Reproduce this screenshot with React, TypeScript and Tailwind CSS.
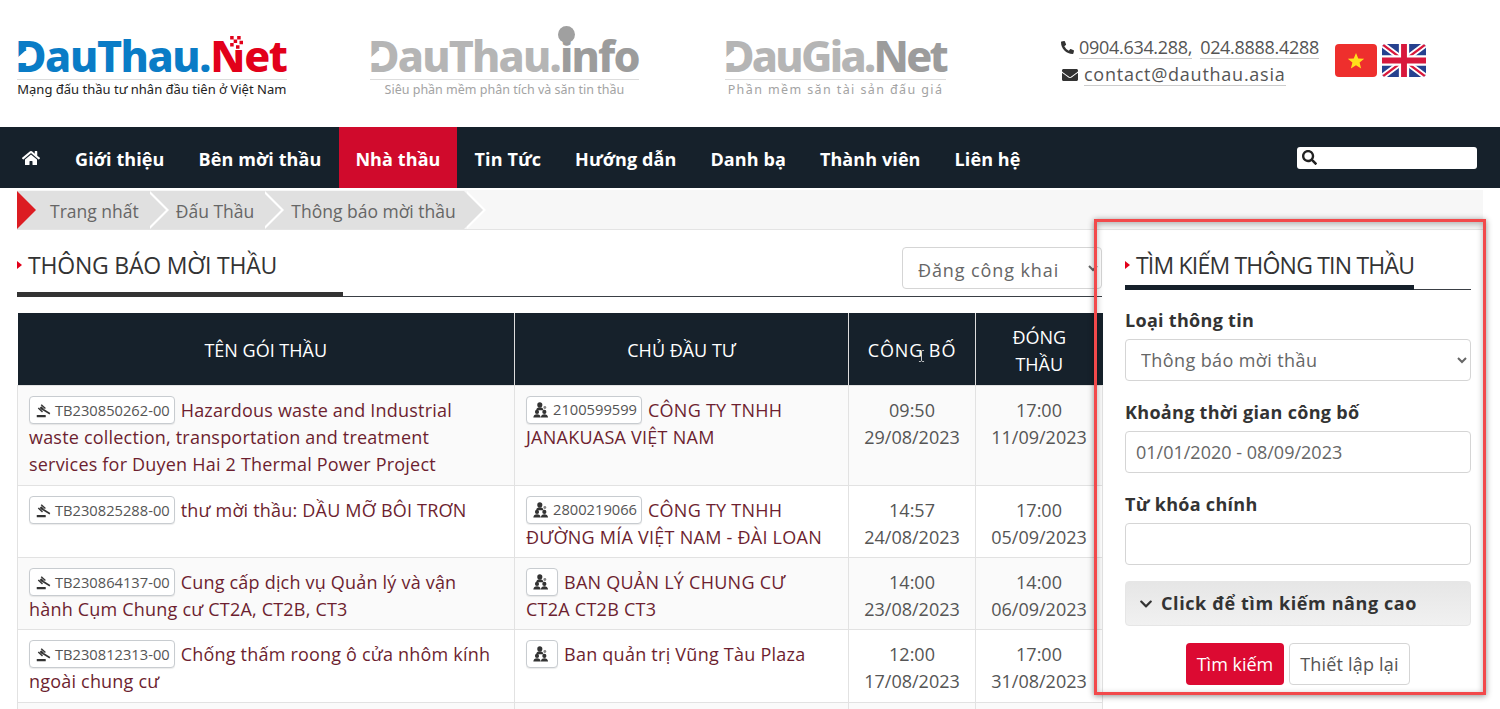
import React from 'react';
import { FaChevronDown, FaEnvelope, FaHome, FaPhoneAlt, FaSearch } from 'react-icons/fa';

const navItems = ['Giới thiệu', 'Bên mời thầu', 'Nhà thầu', 'Tin Tức', 'Hướng dẫn', 'Danh bạ', 'Thành viên', 'Liên hệ'];

const rows = [
  {
    code: 'TB230850262-00',
    title: 'Hazardous waste and Industrial waste collection, transportation and treatment services for Duyen Hai 2 Thermal Power Project',
    taxCode: '2100599599',
    owner: 'CÔNG TY TNHH JANAKUASA VIỆT NAM',
    published: ['09:50', '29/08/2023'],
    closing: ['17:00', '11/09/2023'],
    rowClass: 'h-[100px] bg-[#fafafa]',
  },
  {
    code: 'TB230825288-00',
    title: 'thư mời thầu: DẦU MỠ BÔI TRƠN',
    taxCode: '2800219066',
    owner: 'CÔNG TY TNHH ĐƯỜNG MÍA VIỆT NAM - ĐÀI LOAN',
    published: ['14:57', '24/08/2023'],
    closing: ['17:00', '05/09/2023'],
    rowClass: 'h-[72px] bg-white',
  },
  {
    code: 'TB230864137-00',
    title: 'Cung cấp dịch vụ Quản lý và vận hành Cụm Chung cư CT2A, CT2B, CT3',
    taxCode: '',
    owner: 'BAN QUẢN LÝ CHUNG CƯ CT2A CT2B CT3',
    published: ['14:00', '23/08/2023'],
    closing: ['14:00', '06/09/2023'],
    rowClass: 'h-[72px] bg-[#fafafa]',
  },
  {
    code: 'TB230812313-00',
    title: 'Chống thấm roong ô cửa nhôm kính ngoài chung cư',
    taxCode: '',
    owner: 'Ban quản trị Vũng Tàu Plaza',
    published: ['12:00', '17/08/2023'],
    closing: ['17:00', '31/08/2023'],
    rowClass: 'h-[73px] bg-white',
  },
];

const GavelIcon = () => (
  <svg viewBox="0 0 20 20" className="h-[15px] w-[15px] text-[#333333]" fill="currentColor">
    <rect x="1" y="16" width="12" height="3" rx="0.5" />
    <path d="M7.600 1.500l5.600 5.200-1.300 1.400-5.600-5.200z" />
    <path d="M3.700 6l5.600 5.200-1.300 1.400L2.400 7.400z" />
    <path d="M7 4.200l3.600 3.400-2.200 2.400L4.800 6.600z" />
    <path d="M10 7.500l9 5.700-1 2-9.200-5.500z" />
  </svg>
);

const OwnerIcon = () => (
  <svg viewBox="0 0 20 20" className="h-[16px] w-[16px] text-[#333333]" fill="currentColor">
    <circle cx="8.500" cy="3.600" r="3.200" />
    <path d="M4 10.200c0-2.500 2-3.700 4.500-3.700s4.500 1.200 4.500 3.700z" />
    <circle cx="14.800" cy="6.800" r="1.800" opacity="0.6" />
    <circle cx="5" cy="12.400" r="2.600" />
    <path d="M.4 19.500c0-2.700 2-4.200 4.600-4.200s4.600 1.500 4.600 4.200z" />
    <circle cx="14.200" cy="12.400" r="2.600" />
    <path d="M9.800 19.500c0-2.700 2-4.200 4.400-4.200s4.600 1.500 4.600 4.200z" />
  </svg>
);

const Logo = ({
  first,
  second,
  tagline,
  muted,
  logoClass,
  tagClass,
  children,
}: {
  first: string;
  second: string;
  tagline: string;
  muted?: boolean;
  logoClass: string;
  tagClass: string;
  children?: React.ReactNode;
}) => (
  <div className="relative w-fit">
    <div className={`ml-[-2px] font-['Noto_Sans'] text-[43px] leading-[47px] font-extrabold whitespace-nowrap ${logoClass} ${muted ? 'text-[#b5b5b5]' : 'text-[#0a7cc6]'}`}>
      {first}
      <span className={muted ? 'text-[#9c9c9c]' : 'text-[#e2001a]'}>{second}</span>
    </div>
    {/* notch of the logo's D */}
    <svg viewBox="0 0 14 14" className="absolute top-[18px] left-[-1px] h-[14px] w-[14px]">
      <path d="M0 9 9 1h5v12H0z" fill="#ffffff" />
    </svg>
    {children}
    <div className={`border-t border-[#dddddd] pt-[1px] text-center font-['Noto_Sans'] leading-[17px] whitespace-nowrap ${tagClass} ${muted ? 'text-[#a3a3a3]' : 'text-[#222222]'}`}>
      {tagline}
    </div>
  </div>
);

const UkFlag = () => (
  <svg viewBox="0 0 60 45" className="h-[33px] w-[44px] rounded-[4px]">
    <rect width="60" height="45" fill="#26418f" />
    <path d="M0 0 60 45M60 0 0 45" stroke="#ffffff" strokeWidth="8" />
    <path d="M0 0 60 45M60 0 0 45" stroke="#d8183c" strokeWidth="3" />
    <path d="M30 0V45M0 22.500H60" stroke="#ffffff" strokeWidth="14" />
    <path d="M30 0V45M0 22.500H60" stroke="#d8183c" strokeWidth="8" />
  </svg>
);

const VnFlag = () => (
  <div className="flex h-[33px] w-[42px] items-center justify-center rounded-[4px] bg-[#ee2f2d]">
    <svg viewBox="0 0 20 20" className="h-[18px] w-[18px]">
      <path d="M10 1l2.500 6.200 6.600.4-5.100 4.200 1.700 6.400L10 14.700l-5.700 3.500L6 11.800.9 7.600l6.600-.4z" fill="#ffe01b" />
    </svg>
  </div>
);

const Crumb = ({ label, className }: { label: string; className: string }) => (
  <div className={`relative flex h-[38px] items-center bg-[#e0e0e0] pt-[2px] pr-[8px] text-[#666666] ${className}`}>
    {label}
    <span className="absolute top-0 right-[-22px] h-0 w-0 border-y-[19px] border-l-[19px] border-y-transparent border-l-white" />
    <span className="absolute top-0 right-[-19px] h-0 w-0 border-y-[19px] border-l-[19px] border-y-transparent border-l-[#e0e0e0]" />
  </div>
);

const Badge = ({ icon, text }: { icon: React.ReactNode; text?: string }) => (
  <span className={`relative top-[1px] my-[-6px] mr-[6px] inline-flex h-[28px] items-center gap-[4px] rounded-[4px] border border-[#c8ccd0] bg-white pl-[6px] align-baseline text-[14.7px] tracking-normal text-[#555555] shadow-[0_1px_1px_rgba(0,0,0,0.08)] ${text ? 'pr-[4px]' : 'pr-[8px]'}`}>
    {icon}
    {text}
  </span>
);

const Field = ({ label, children }: { label: string; children: React.ReactNode }) => (
  <div className="mb-[16px]">
    <label className="mb-[4px] block text-[18px] leading-[30px] font-bold tracking-[0.3px] text-[#333333]">{label}</label>
    {children}
  </div>
);

const App = () => {
  return (
    <div className="h-[709px] overflow-hidden bg-white font-['Open_Sans',sans-serif] text-[18px] text-[#555555]">
      <header className="flex h-[127px] items-start px-[17px] pt-[32px]">
        <div className="w-[353px]">
          <Logo first="DauThau." second="Net" tagline="Mạng đấu thầu tư nhân đầu tiên ở Việt Nam" logoClass="tracking-[-1.4px]" tagClass="text-[13px]">
            {/* chequered mark over the N */}
            <svg viewBox="0 0 12 12" className="absolute top-[4px] left-[212px] h-[14px] w-[14px]">
              <rect width="12" height="12" fill="#ffffff" />
              <path d="M1 0h3v3H1zM7 0h3v3H7zM4 3h3v3H4zM9 4h3v3H9zM1 6h3v3H1zM6 8h3v3H6z" fill="#e2001a" />
            </svg>
          </Logo>
        </div>
        <div className="w-[355px]">
          <Logo first="DauThau." second="info" tagline="Siêu phần mềm phân tích và săn tin thầu" muted logoClass="tracking-[-1.8px]" tagClass="text-[12.5px]">
            <span className="absolute top-[-6px] left-[188px] h-[17px] w-[17px] rounded-full bg-[#a0a0a0]" />
          </Logo>
        </div>
        <div className="w-[336px]">
          <Logo first="DauGia." second="Net" tagline="Phần mềm săn tài sản đấu giá" muted logoClass="tracking-[-2.7px]" tagClass="text-[12.5px] tracking-[1.4px]" />
        </div>
        <div className="w-[274px] pt-[2px] text-[18px] text-[#555555]">
          <div className="flex h-[27px] items-center gap-[5px]">
            <FaPhoneAlt className="h-[13px] w-[13px] text-[#333333]" />
            <span className="border-b border-[#cccccc] leading-[22px] tracking-[-0.3px]">0904.634.288,</span>
            <span className="ml-[3px] border-b border-[#cccccc] leading-[22px] tracking-[-0.3px]">024.8888.4288</span>
          </div>
          <div className="flex h-[27px] items-center gap-[5px]">
            <FaEnvelope className="h-[16px] w-[18px] text-[#333333]" />
            <span className="border-b border-[#cccccc] leading-[22px] tracking-[0.75px]">contact@dauthau.asia</span>
          </div>
        </div>
        <div className="flex gap-[5px] pt-[12px]">
          <VnFlag />
          <UkFlag />
        </div>
      </header>

      <nav className="flex h-[61px] items-center bg-[#16212b] pr-[23px] pl-[22px] text-white">
        <FaHome className="mr-[18px] h-[18px] w-[18px]" />
        {navItems.map((item) => (
          <a
            key={item}
            className={`flex h-full items-center pt-[3px] text-[18px] font-bold tracking-[0.1px] ${item === 'Nhà thầu' ? 'mx-[1px] bg-[#d00a2c] px-[16px]' : 'px-[17px]'}`}
          >
            {item}
          </a>
        ))}
        <div className="ml-auto flex h-[22px] w-[180px] items-center rounded-[3px] bg-white px-[5px] text-[#222222]">
          <FaSearch className="h-[15px] w-[15px]" />
        </div>
      </nav>

      <div className="mx-[17px] mt-[2px]">
        <div className="h-[40px] overflow-hidden border-b border-[#e4e4e4] bg-[#f7f7f7] pt-[1px] text-[17.5px]">
          <div className="relative flex">
            <span className="absolute top-0 left-0 z-40 h-0 w-0 border-y-[19px] border-l-[19px] border-y-transparent border-l-[#dc1c22]" />
            <Crumb label="Trang nhất" className="z-30 pl-[33px]" />
            <Crumb label="Đấu Thầu" className="z-20 pl-[29px]" />
            <Crumb label="Thông báo mời thầu" className="z-10 pl-[29px]" />
          </div>
        </div>

        <div className="flex gap-[23px]">
          <main className="w-[1085px]">
            <div className="relative mt-[17px] flex items-end justify-between border-b border-[#3a3f45] pb-[7px]">
              <div className="flex items-center gap-[6px] pb-[8px]">
                <span className="h-0 w-0 border-y-[4px] border-l-[5px] border-y-transparent border-l-[#e2001a]" />
                <h1 className="text-[23px] leading-[32px] tracking-[-0.2px] text-[#333333]">THÔNG BÁO MỜI THẦU</h1>
              </div>
              <select className="h-[42px] w-[200px] rounded-[4px] border border-[#d5d5d5] bg-white pt-[3px] pl-[11px] text-[18px] tracking-[0.9px] text-[#666666]">
                <option>Đăng công khai</option>
              </select>
              <span className="absolute bottom-[-1px] left-0 h-[5px] w-[326px] bg-[#333333]" />
            </div>

            <table className="mt-[16px] w-full table-fixed border-collapse text-[18px] leading-[27px]">
              <colgroup>
                <col className="w-[497px]" />
                <col className="w-[334px]" />
                <col className="w-[127px]" />
                <col className="w-[127px]" />
              </colgroup>
              <thead>
                <tr className="h-[72px] bg-[#16212b] text-white">
                  <th className="border-r border-[#dddddd] px-[12px] pt-[4px] font-normal">TÊN GÓI THẦU</th>
                  <th className="border-r border-[#dddddd] px-[12px] pt-[4px] font-normal">CHỦ ĐẦU TƯ</th>
                  <th className="relative border-r border-[#dddddd] px-[6px] pt-[4px] font-normal tracking-[0.9px] whitespace-nowrap">
                    CÔNG BỐ
                    {/* mouse cursor caught in the screenshot */}
                    <svg viewBox="0 0 8 14" className="absolute top-[37px] left-[69px] h-[12px] w-[7px] text-[#e8e8e8]" fill="none" stroke="currentColor">
                      <path d="M1 .5h2l1 1 1-1h2M4 1.500v11M1 13.500h2l1-1 1 1h2" />
                    </svg>
                  </th>
                  <th className="px-[12px] pt-[4px] font-normal">ĐÓNG THẦU</th>
                </tr>
              </thead>
              <tbody>
                {rows.map((row) => (
                  <tr key={row.code} className={row.rowClass}>
                    <td className="border border-[#e2e2e2] pt-[11px] pr-[12px] pb-[6px] pl-[11px] align-top tracking-[0.2px] text-[#6d1f30]">
                      <Badge icon={<GavelIcon />} text={row.code} />
                      {row.title}
                    </td>
                    <td className="border border-[#e2e2e2] pt-[11px] pr-[20px] pb-[6px] pl-[11px] align-top tracking-[0.25px] text-[#6d1f30]">
                      <Badge icon={<OwnerIcon />} text={row.taxCode} />
                      {row.owner}
                    </td>
                    <td className="border border-[#e2e2e2] pt-[11px] pb-[6px] text-center align-top">
                      {row.published[0]}
                      <br />
                      {row.published[1]}
                    </td>
                    <td className="border border-[#e2e2e2] pt-[11px] pb-[6px] text-center align-top">
                      {row.closing[0]}
                      <br />
                      {row.closing[1]}
                    </td>
                  </tr>
                ))}
                <tr className="h-[40px] bg-[#fafafa]">
                  <td className="border border-[#e2e2e2]" />
                  <td className="border border-[#e2e2e2]" />
                  <td className="border border-[#e2e2e2]" />
                  <td className="border border-[#e2e2e2]" />
                </tr>
              </tbody>
            </table>
          </main>

          <aside className="relative w-[346px] pt-[19px]">
            <div className="relative flex items-center gap-[6px] border-b border-[#3a3f45] pb-[8px]">
              <span className="h-0 w-0 border-y-[4px] border-l-[5px] border-y-transparent border-l-[#e2001a]" />
              <h2 className="text-[23px] leading-[32px] tracking-[-0.8px] text-[#333333]">TÌM KIẾM THÔNG TIN THẦU</h2>
              <span className="absolute bottom-[-1px] left-0 h-[5px] w-[289px] bg-[#16212b]" />
            </div>
            <div className="mt-[15px]">
              <Field label="Loại thông tin">
                <select className="h-[42px] w-full rounded-[4px] border border-[#d5d5d5] bg-white pl-[11px] text-[18px] tracking-[0.4px] text-[#666666]">
                  <option>Thông báo mời thầu</option>
                </select>
              </Field>
              <Field label="Khoảng thời gian công bố">
                <input
                  readOnly
                  value="01/01/2020 - 08/09/2023"
                  className="h-[42px] w-full rounded-[4px] border border-[#d5d5d5] bg-white px-[10px] text-[18px] text-[#666666]"
                />
              </Field>
              <Field label="Từ khóa chính">
                <input className="h-[42px] w-full rounded-[4px] border border-[#d5d5d5] bg-white px-[10px] text-[18px]" />
              </Field>
            </div>
            <div className="flex h-[45px] items-center gap-[8px] rounded-[4px] border border-[#e6e6e6] bg-gradient-to-b from-[#e6e6e6] to-[#f1f1f1] px-[13px] text-[18px] font-bold tracking-[0.6px] text-[#333333]">
              <FaChevronDown className="h-[14px] w-[14px]" />
              Click để tìm kiếm nâng cao
            </div>
            <div className="mt-[17px] flex justify-center gap-[5px] text-[18px]">
              <button type="button" className="h-[42px] w-[98px] rounded-[4px] bg-[#dc0a32] text-white">
                Tìm kiếm
              </button>
              <button type="button" className="h-[42px] w-[121px] rounded-[4px] border border-[#d5d5d5] bg-white tracking-[0.2px] text-[#555555]">
                Thiết lập lại
              </button>
            </div>
            <div className="pointer-events-none absolute top-[-11px] right-[-15px] left-[-31px] z-30 h-[476px] border-[3px] border-[#f2494b] shadow-[0_1px_6px_rgba(0,0,0,0.45),inset_0_2px_6px_rgba(0,0,0,0.3)]" />
          </aside>
        </div>
      </div>
    </div>
  );
};

export default App;
